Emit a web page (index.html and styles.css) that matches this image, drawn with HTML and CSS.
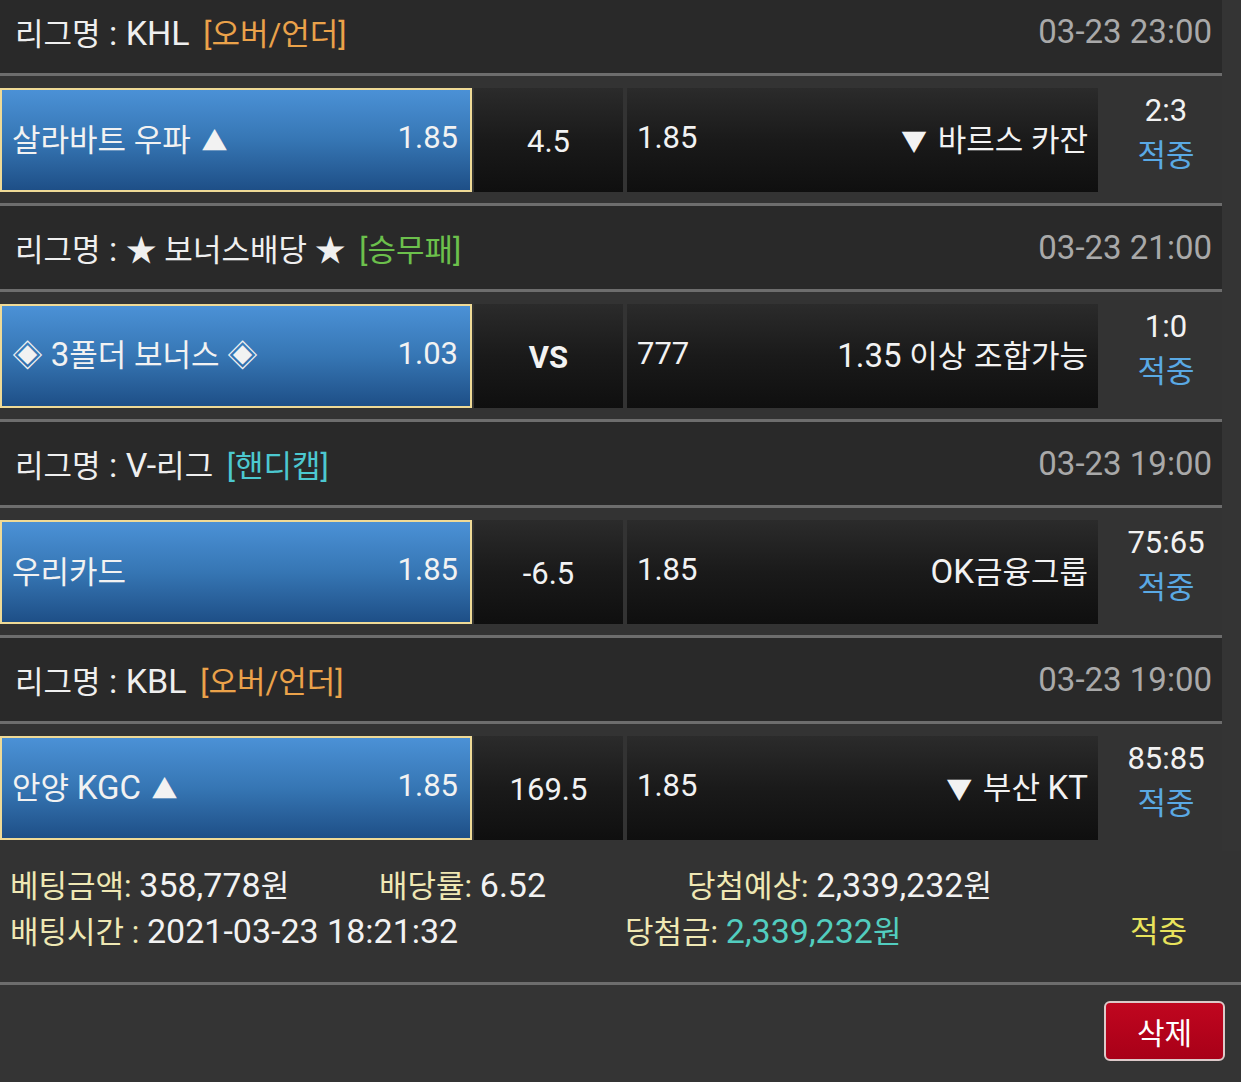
FILE: index.html
```html
<!DOCTYPE html>
<html lang="ko">
  <head>
    <meta charset="UTF-8" />
    <meta name="viewport" content="width=device-width,initial-scale=1.0" />
    <title>배팅내역</title>
    <link rel="stylesheet" href="styles.css">
  </head>
  <body>
    <div class="slip">
      <div class="games">
        <div class="game">
          <div class="league-head">
            <div class="league">리그명<span class="en"> : KHL</span> <span class="type over">[오버/언더]</span></div>
            <div class="date">03-23 23:00</div>
          </div>
          <div class="match-row">
            <div class="pick home">
              <span class="team">살라바트 우파 <span class="arr">▲</span></span>
              <span class="odds">1.85</span>
            </div>
            <div class="line-box">4.5</div>
            <div class="pick away">
              <span class="odds">1.85</span>
              <span class="team"><span class="arr">▼</span> 바르스 카잔</span>
            </div>
            <div class="score">
              <div class="result">2:3</div>
              <div class="hit">적중</div>
            </div>
          </div>
        </div>

        <div class="game">
          <div class="league-head">
            <div class="league">리그명<span class="en"> : </span>★ 보너스배당 ★ <span class="type wdl">[승무패]</span></div>
            <div class="date">03-23 21:00</div>
          </div>
          <div class="match-row">
            <div class="pick home">
              <span class="team">◈ <span class="en">3</span>폴더 보너스 ◈</span>
              <span class="odds">1.03</span>
            </div>
            <div class="line-box vs">VS</div>
            <div class="pick away">
              <span class="odds">777</span>
              <span class="team"><span class="en">1.35</span> 이상 조합가능</span>
            </div>
            <div class="score">
              <div class="result">1:0</div>
              <div class="hit">적중</div>
            </div>
          </div>
        </div>

        <div class="game">
          <div class="league-head">
            <div class="league">리그명<span class="en"> : V-</span>리그 <span class="type handi">[핸디캡]</span></div>
            <div class="date">03-23 19:00</div>
          </div>
          <div class="match-row">
            <div class="pick home">
              <span class="team">우리카드</span>
              <span class="odds">1.85</span>
            </div>
            <div class="line-box">-6.5</div>
            <div class="pick away">
              <span class="odds">1.85</span>
              <span class="team"><span class="en">OK</span>금융그룹</span>
            </div>
            <div class="score">
              <div class="result">75:65</div>
              <div class="hit">적중</div>
            </div>
          </div>
        </div>

        <div class="game last">
          <div class="league-head">
            <div class="league">리그명<span class="en"> : KBL</span> <span class="type over">[오버/언더]</span></div>
            <div class="date">03-23 19:00</div>
          </div>
          <div class="match-row">
            <div class="pick home">
              <span class="team">안양 <span class="en">KGC</span> <span class="arr">▲</span></span>
              <span class="odds">1.85</span>
            </div>
            <div class="line-box">169.5</div>
            <div class="pick away">
              <span class="odds">1.85</span>
              <span class="team"><span class="arr">▼</span> 부산 <span class="en">KT</span></span>
            </div>
            <div class="score">
              <div class="result">85:85</div>
              <div class="hit">적중</div>
            </div>
          </div>
        </div>
      </div>

      <div class="summary">
        <div class="sum-row first">
          <div class="item"><span class="label">베팅금액:</span> <span class="en">358,778</span>원</div>
          <div class="item"><span class="label">배당률:</span> <span class="en">6.52</span></div>
          <div class="item"><span class="label">당첨예상:</span> <span class="en">2,339,232</span>원</div>
        </div>
        <div class="sum-row second">
          <div class="item"><span class="label">배팅시간 :</span> <span class="en">2021-03-23 18:21:32</span></div>
          <div class="item"><span class="label">당첨금:</span> <span class="win"><span class="en">2,339,232</span>원</span></div>
          <div class="item status">적중</div>
        </div>
      </div>

      <div class="actions">
        <button class="del-btn">삭제</button>
      </div>
    </div>
  </body>
</html>
```

FILE: styles.css
```css
* {
  padding: 0;
  margin: 0;
  box-sizing: border-box;
  font-family: 'Roboto', 'Noto Sans CJK KR', sans-serif;
}
body {
  background: #343434;
  color: #f2f2f2;
  font-size: 30px;
}
/* latin runs render a bit larger than hangul in the original */
.en {
  font-size: 33px;
}
.slip {
  margin-top: -10px;
}
.games {
  width: 1222px;
}
.league-head {
  height: 86px;
  background: #292929;
  border-bottom: 3px solid #6d6d6d;
  display: flex;
  align-items: center;
  justify-content: space-between;
  padding: 0 10px 0 15px;
}
.league {
  color: #efefef;
  font-size: 31px;
}
.league .en {
  font-size: 34px;
}
.type {
  margin-left: 6px;
}
.over {
  color: #eba24a;
}
.wdl {
  color: #6cc04c;
}
.handi {
  color: #4cc8d0;
}
.date {
  color: #a9a9a9;
  font-size: 33px;
}
.match-row {
  height: 130px;
  background: #333;
  border-bottom: 3px solid #6d6d6d;
  display: flex;
  padding: 12px 0 11px;
}
.game.last .match-row {
  border-bottom: none;
  height: 127px;
}
.pick {
  display: flex;
  align-items: center;
  justify-content: space-between;
  height: 104px;
  padding-bottom: 5px;
}
.team {
  font-size: 31px;
}
.arr {
  font-size: 26px;
  margin-left: 3px;
}
.away .arr {
  margin: 0 3px 0 0;
}
.home {
  width: 472px;
  border: 2px solid #efda96;
  padding-left: 10px;
  padding-right: 12px;
  background: linear-gradient(#4b91d6, #3676b4 50%, #1e4f87);
}
.away {
  width: 471px;
  padding-left: 10px;
  padding-right: 10px;
  background: linear-gradient(#2b2b2b, #1a1a1a 50%, #0f0f0f);
}
.odds {
  font-size: 31px;
}
.line-box {
  width: 149px;
  height: 104px;
  margin: 0 4px 0 2px;
  display: flex;
  align-items: center;
  justify-content: center;
  padding-top: 2px;
  font-size: 31px;
  background: linear-gradient(#2b2b2b, #1a1a1a 50%, #0f0f0f);
}
.line-box.vs {
  font-weight: 700;
}
.score {
  flex: 1;
  text-align: center;
  line-height: 45px;
  padding-left: 12px;
}
.result {
  font-size: 31px;
}
.hit {
  color: #5aa9e4;
  font-size: 31px;
}
.summary {
  background: #333;
  border-bottom: 3px solid #6d6d6d;
  padding: 12px 0 27px 10px;
  line-height: 45px;
  font-size: 31px;
}
.summary .en {
  font-size: 34px;
}
.sum-row {
  display: flex;
}
.label {
  color: #efe8b4;
}
.first .item:nth-child(1) {
  width: 369px;
}
.first .item:nth-child(2) {
  width: 308px;
}
.second .item:nth-child(1) {
  width: 615px;
}
.second .item:nth-child(2) {
  width: 505px;
}
.win {
  color: #52cdbf;
}
.status {
  color: #e8e35c;
}
.actions {
  display: flex;
  justify-content: flex-end;
  padding: 16px 16px 0 0;
}
.del-btn {
  width: 121px;
  height: 60px;
  border: 2px solid #dcc9c9;
  border-radius: 6px;
  background: linear-gradient(#c0061f, #a80018);
  color: #fff;
  font-size: 30px;
  font-family: 'Roboto', 'Noto Sans CJK KR', sans-serif;
}
```
